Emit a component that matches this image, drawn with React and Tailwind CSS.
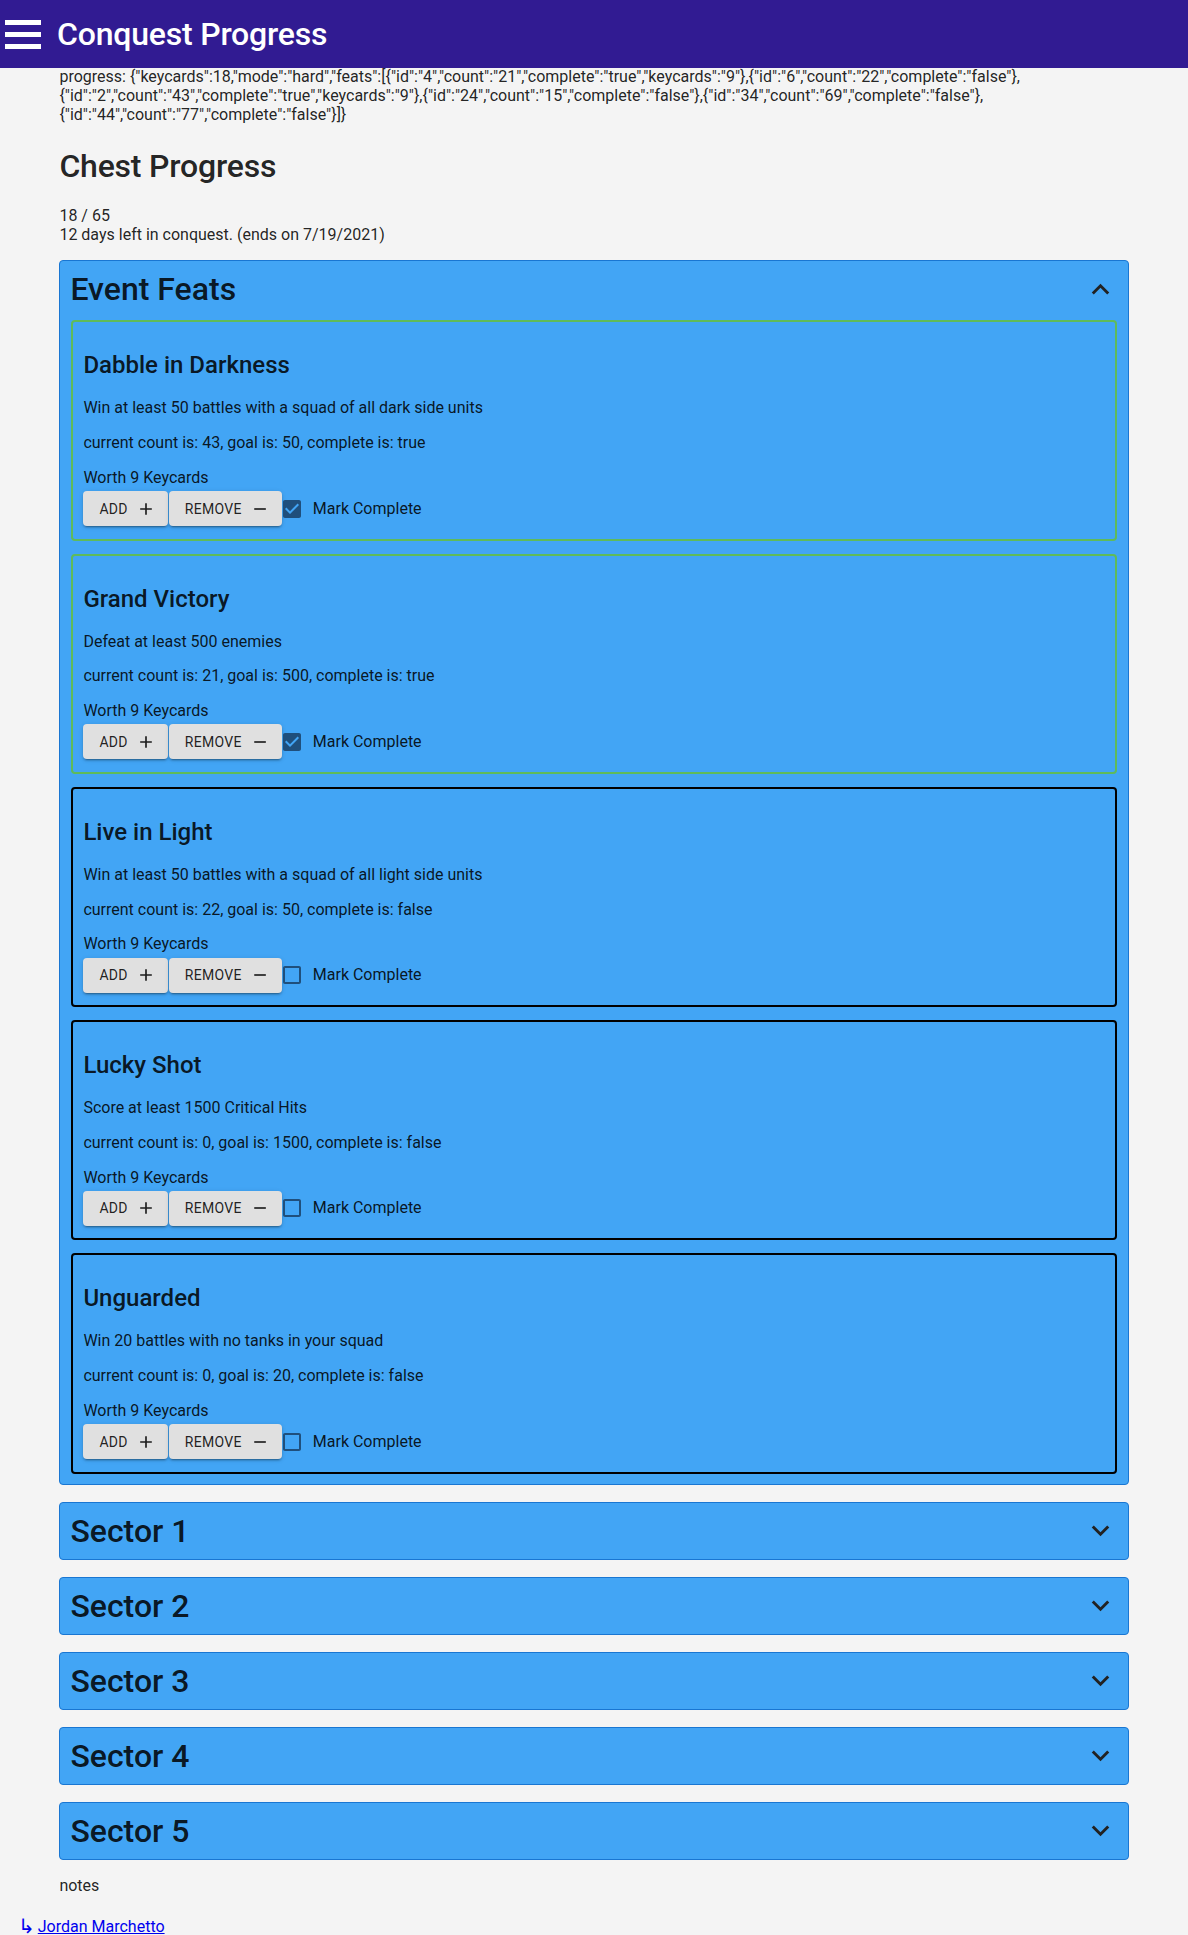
const feats = [
  { name: "Dabble in Darkness", desc: "Win at least 50 battles with a squad of all dark side units", count: 43, goal: 50, complete: true },
  { name: "Grand Victory", desc: "Defeat at least 500 enemies", count: 21, goal: 500, complete: true },
  { name: "Live in Light", desc: "Win at least 50 battles with a squad of all light side units", count: 22, goal: 50, complete: false },
  { name: "Lucky Shot", desc: "Score at least 1500 Critical Hits", count: 0, goal: 1500, complete: false },
  { name: "Unguarded", desc: "Win 20 battles with no tanks in your squad", count: 0, goal: 20, complete: false },
];

const sectors = ["Sector 1", "Sector 2", "Sector 3", "Sector 4", "Sector 5"];

function Chevron({ up }) {
  return (
    <svg viewBox="0 0 24 24" className="w-[35px] h-[35px] fill-[#222]">
      {up ? (
        <path d="m12 8-6 6 1.41 1.41L12 10.83l4.59 4.58L18 14z" />
      ) : (
        <path d="M16.59 8.59 12 13.17 7.41 8.59 6 10l6 6 6-6z" />
      )}
    </svg>
  );
}

function Button({ label, icon }) {
  return (
    <button className="h-[35px] flex items-center pl-4 pr-3 rounded bg-[#e0e0e0] text-[14px] tracking-[0.3px] uppercase text-black/[0.87] shadow-[0_3px_1px_-2px_rgba(0,0,0,0.2),0_2px_2px_0_rgba(0,0,0,0.14),0_1px_5px_0_rgba(0,0,0,0.12)]">
      <span className="pt-px">{label}</span>
      <svg viewBox="0 0 24 24" className="ml-2 w-5 h-5 fill-black/[0.87]">
        <path d={icon} />
      </svg>
    </button>
  );
}

function FeatCard({ feat }) {
  // finished feats get the green outline, the rest stay black
  const border = feat.complete ? "border-[#5fbb5a]" : "border-black";
  return (
    <div className={`border-2 ${border} rounded px-[10px] pt-[9px] pb-[9px]`}>
      <h2 className="mt-[20px] text-[24px] leading-[28px] font-medium">{feat.name}</h2>
      <p className="mt-[20px] leading-[18.75px]">{feat.desc}</p>
      <p className="mt-[16px] leading-[18.75px]">
        current count is: {feat.count}, goal is: {feat.goal}, complete is: {String(feat.complete)}
      </p>
      <p className="mt-[16px] leading-[18.75px]">Worth 9 Keycards</p>
      <div className="h-[42px] flex items-center">
        <Button label="Add" icon="M19 13h-6v6h-2v-6H5v-2h6V5h2v6h6v2z" />
        <div className="ml-px">
          <Button label="Remove" icon="M19 13H5v-2h14v2z" />
        </div>
        <svg viewBox="3 3 18 18" className="ml-[1px] w-[18px] h-[18px] fill-[#1f4f7c]">
          {feat.complete ? (
            <path d="M19 3H5c-1.11 0-2 .9-2 2v14c0 1.1.89 2 2 2h14c1.11 0 2-.9 2-2V5c0-1.1-.89-2-2-2zm-9 14l-5-5 1.41-1.41L10 14.17l7.59-7.59L19 8l-9 9z" />
          ) : (
            <path d="M19 5v14H5V5h14m0-2H5c-1.1 0-2 .9-2 2v14c0 1.1.9 2 2 2h14c1.1 0 2-.9 2-2V5c0-1.1-.9-2-2-2z" />
          )}
        </svg>
        <span className="ml-[12px]">Mark Complete</span>
      </div>
    </div>
  );
}

function AccordionHead({ title, open }) {
  return (
    <div className="flex items-center justify-between pl-[10px] pr-[10px] py-[10px]">
      <span className="text-[32px] leading-[36px] font-medium">{title}</span>
      <Chevron up={open} />
    </div>
  );
}

export default function App() {
  return (
    <div className="min-h-screen bg-[#f4f4f4] font-['Roboto',sans-serif] text-black/[0.87]">
      <header className="h-[68px] bg-[#311b92] flex items-center pl-[5px] gap-4">
        <div className="flex flex-col gap-[7px]">
          <div className="w-9 h-[5px] bg-white" />
          <div className="w-9 h-[5px] bg-white" />
          <div className="w-9 h-[5px] bg-white" />
        </div>
        <h1 className="text-white text-[32px] leading-[36px] font-medium tracking-[-0.2px]">Conquest Progress</h1>
      </header>

      <main className="mx-[5%]">
        <div className="text-[16px] leading-[18.75px]">
          progress: {'{"keycards":18,"mode":"hard","feats":[{"id":"4","count":"21","complete":"true","keycards":"9"},{"id":"6","count":"22","complete":"false"},'}
          <br />
          {'{"id":"2","count":"43","complete":"true","keycards":"9"},{"id":"24","count":"15","complete":"false"},{"id":"34","count":"69","complete":"false"},'}
          <br />
          {'{"id":"44","count":"77","complete":"false"}]}'}
        </div>

        <h2 className="mt-[24px] text-[32px] leading-[37.5px] font-medium tracking-[-0.2px]">Chest Progress</h2>
        <div className="mt-[21px] leading-[18.75px]">
          <div>18 / 65</div>
          <div>12 days left in conquest. (ends on 7/19/2021)</div>
        </div>

        <section className="mt-[16px] bg-[#42a5f5] border border-[#1976d2] rounded">
          <AccordionHead title="Event Feats" open />
          <div className="px-[11px] pt-[3px] pb-[10px] flex flex-col gap-[13px]">
            {feats.map((f) => (
              <FeatCard key={f.name} feat={f} />
            ))}
          </div>
        </section>

        <div className="mt-[17px] flex flex-col gap-[17px]">
          {sectors.map((s) => (
            <section key={s} className="bg-[#42a5f5] border border-[#1976d2] rounded">
              <AccordionHead title={s} />
            </section>
          ))}
        </div>

        <p className="mt-[17px] leading-[18.75px]">notes</p>
      </main>

      <div className="mt-[21px] pl-[18px] leading-[18.75px] pb-2 flex items-end">
        <span className="text-[#0000ee] font-['DejaVu_Sans',sans-serif] text-[20px] leading-[20px] mr-[3px]">↳</span>
        <a href="#" className="text-[#0000ee] underline">Jordan Marchetto</a>
      </div>
    </div>
  );
}
